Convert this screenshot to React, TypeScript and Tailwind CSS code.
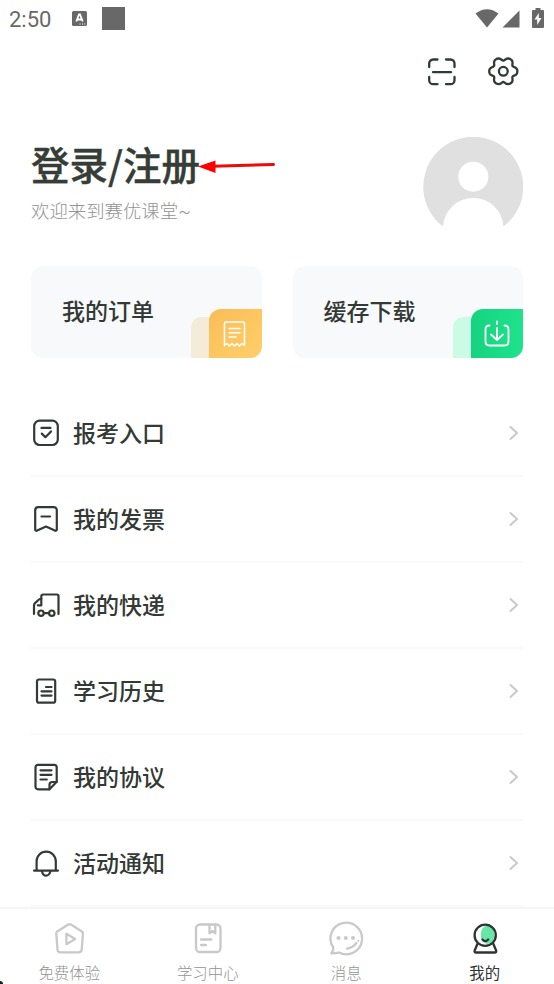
import type { ReactNode } from "react";

type IconProps = {
  w: number;
  h: number;
  stroke?: number;
  className?: string;
  children: ReactNode;
};

function Icon({ w, h, stroke = 2, className = "", children }: IconProps) {
  return (
    <svg
      width={w}
      height={h}
      viewBox={`0 0 ${w} ${h}`}
      fill="none"
      stroke="currentColor"
      strokeWidth={stroke}
      strokeLinecap="round"
      strokeLinejoin="round"
      className={`block shrink-0 ${className}`}
    >
      {children}
    </svg>
  );
}

const menuItems = [
  {
    label: "报考入口",
    icon: (
      <>
        <rect x="3.2" y="2.6" width="23.6" height="24.4" rx="5.5" />
        <path d="M10.5 9.9h9M10.8 15.6l3.6 3.6 5.6-5.8" />
      </>
    ),
  },
  {
    label: "我的发票",
    icon: (
      <>
        <path d="M4.2 25.5V6.2a3 3 0 0 1 3-3h15.6a3 3 0 0 1 3 3V25.5c0 1-1 1.6-2 1.1L15 22.5l-8.8 4.1c-1 .5-2-.1-2-1.1z" />
        <path d="M10.5 12.5h8.5" />
      </>
    ),
  },
  {
    label: "我的快递",
    icon: (
      <>
        <path d="M3 24v-8.500q0-1.500 1-2.400l4-3.600q.800-.700 2.300-.700V6.500q0-2 2-2h13.500q1.700 0 1.700 1.700V24" />
        <path d="M10.300 8.800v6.500H6.800" />
        <circle cx="10" cy="23.200" r="2.700" />
        <circle cx="20.800" cy="23.200" r="2.700" />
        <path d="M13 23.200h5" />
      </>
    ),
  },
  {
    label: "学习历史",
    icon: (
      <>
        <rect x="6" y="3.500" width="18.200" height="23.200" rx="2" />
        <path d="M15 11h5.500M10.500 15.300h10M10.500 19.600h10" />
      </>
    ),
  },
  {
    label: "我的协议",
    icon: (
      <>
        <path d="M18.500 27.300H7a2.500 2.500 0 0 1-2.500-2.500V5.300A2.500 2.500 0 0 1 7 2.800h16.200A2.500 2.500 0 0 1 25.700 5.300v14.500z" />
        <path d="M18.500 27.300v-4.600q0-2.700 2.700-2.700h4.500M9.500 8.300h11M9.500 12.800h11M9.500 17.500h6.300" />
      </>
    ),
  },
  {
    label: "活动通知",
    icon: (
      <>
        <path d="M3 22.600h24M5.600 22.300V13.300a9.600 9.600 0 0 1 19.200 0v9" />
        <path d="M10.800 23q1.300 4.700 4.300 4.700t4.500-4.700" />
      </>
    ),
  },
];

const tabs = [
  {
    label: "免费体验",
    icon: (
      <>
        <path d="M17.900 4.700a3 3 0 0 1 3.400 0l10.600 6.800a2.500 2.500 0 0 1 1 2.500l-1.200 15.600a3 3 0 0 1-3 2.700H10.500a3 3 0 0 1-3-2.700l-1.200-15.600a2.500 2.500 0 0 1 1-2.500z" />
        <path d="M16.400 13.800v10.400l8.800-5.200z" />
      </>
    ),
  },
  {
    label: "学习中心",
    icon: (
      <>
        <rect x="7" y="4.500" width="24.500" height="27.500" rx="4" />
        <path d="M20.500 5v8.300l2.900-2.300 2.900 2.300V5M12 19.500h10.300M12 25h5" />
      </>
    ),
  },
  {
    label: "消息",
    icon: (
      <>
        <path d="M6.300 27.500A15.800 15.800 0 1 1 12 32.500q-3.500 1-7.700.800 2.200-2.500 2-5.800z" />
        <path d="M29.300 23q-3.300 4.600-9.200 5.700" />
        <g fill="currentColor" stroke="none">
          <circle cx="11.500" cy="18" r="2" />
          <circle cx="18.800" cy="18" r="2" />
          <circle cx="26" cy="18" r="2" />
          <circle cx="31.300" cy="20.800" r="1" />
        </g>
      </>
    ),
  },
  {
    label: "我的",
    active: true,
    icon: (
      <>
        <path d="M11.500 23.800l-2.800 6.700q-.700 2 1.500 2h18.400q2.200 0 1.500-2l-2.800-6.700" />
        <circle cx="19.200" cy="15.500" r="11" fill="#fff" stroke="none" />
        <ellipse cx="21.500" cy="14.800" rx="6.800" ry="9.200" fill="#67e7a5" stroke="none" />
        <circle cx="19.200" cy="15.300" r="10.600" />
        <path d="M16.500 19.500q2.700 3.200 5.700 0" />
      </>
    ),
  },
];

// six-lobed outline of the settings icon
const gearPoints = Array.from({ length: 72 }, (_, i) => {
  const a = (i / 72) * Math.PI * 2;
  const r = 12.7 + 1.7 * Math.cos(a * 6) - 0.35 * Math.cos(a * 12);
  return `${(16.3 + r * Math.cos(a)).toFixed(2)},${(16.3 + r * Math.sin(a)).toFixed(2)}`;
}).join(" ");

function StatusBar() {
  return (
    <header className="flex h-[38px] items-center pl-[9px] pr-[9px] text-[#686868]">
      <span className="w-[63px] pt-[2px] font-[Roboto,sans-serif] text-[22px] leading-none">2:50</span>
      <svg width="15" height="15" viewBox="0 0 15 15" className="mt-[-2px]">
        <rect width="15" height="15" rx="1.500" fill="currentColor" />
        <path d="M4.300 10.500L7 3.500h1l2.700 7M5.300 8.500h4.400" fill="none" stroke="#fff" strokeWidth="1.800" />
        <path d="M7.500 13h1M10 13h1M12.300 13h1" stroke="#fff" strokeWidth="1" />
      </svg>
      <div className="ml-[15px] mt-[-1px] size-[23px] bg-[#686868]" />
      <div className="ml-auto flex items-center">
        <svg width="24" height="19" viewBox="0 0 24 19" fill="currentColor" className="mt-[-2px]">
          <path d="M.500 4.500Q12-4 23.500 4.500L12 18.500z" />
        </svg>
        <svg width="18" height="18" viewBox="0 0 18 18" fill="currentColor" className="ml-[3px] mt-[-1px]">
          <path d="M17.500.500v17H.500z" />
        </svg>
        <svg width="12" height="20" viewBox="0 0 12 20" fill="currentColor" className="ml-[12px] mr-px mt-[-2px]">
          <path d="M3.500 0h5v2H11q1 0 1 1v16q0 1-1 1H1q-1 0-1-1V3q0-1 1-1h2.500z" />
          <path d="M6.800 5L2.500 11.500h2.700V17l4.300-7H6.800z" fill="#fff" />
        </svg>
      </div>
    </header>
  );
}

function Toolbar() {
  return (
    <div className="flex h-[68px] items-center justify-end gap-[30px] pr-[34px] text-[#333934]">
      <Icon w={30} h={30} stroke={2.300} className="mt-[-1px]">
        <path d="M2.200 10V6.500a4 4 0 0 1 4-4H10.500M19 2.500h4.500a4 4 0 0 1 4 4V10M27.500 20v3.200a4 4 0 0 1-4 4H19M10.500 27.200H6.200a4 4 0 0 1-4-4V20M6 15.200h18" />
      </Icon>
      <Icon w={33} h={33} stroke={2.300} className="mt-[-1px]">
        <polygon points={gearPoints} />
        <circle cx="16.300" cy="16.300" r="4.400" />
      </Icon>
    </div>
  );
}

function Profile() {
  return (
    <section className="flex h-[160px] justify-between px-[31px] pt-[31px]">
      <div className="relative">
        <h1 className="mt-[-2px] text-[38.500px] font-medium leading-[56px] text-[#363d37] [-webkit-text-stroke:0.400px_#363d37]">
          登录/注册
        </h1>
        <p className="mt-[6px] text-[18.400px] font-light leading-[27px] text-[#939393]">
          欢迎来到赛优课堂<span className="font-[Roboto,sans-serif]">~</span>
        </p>
        <svg width="78" height="16" viewBox="0 0 78 16" className="absolute left-[167px] top-[21px]">
          <path d="M15 8.300L75.500 6.500" stroke="#e80c0c" strokeWidth="3" strokeLinecap="round" />
          <path d="M0 8.500L17.500 2.500v12.500z" fill="#f00" />
        </svg>
      </div>
      <svg width="100" height="100" viewBox="0 0 100 100">
        <path
          d="M20 89.500a50 50 0 1 1 60.500 0A30.300 30.300 0 0 0 20 89.500z"
          fill="#e0e0e0"
        />
        <circle cx="50.300" cy="39.700" r="15" fill="#fff" />
      </svg>
    </section>
  );
}

function Shortcuts() {
  return (
    <section className="grid grid-cols-2 gap-[31px] px-[31px]">
      <div className="flex h-[92px] justify-between overflow-hidden rounded-[12px] bg-[#f8f9fb]">
        <span className="pl-[31px] pt-[26px] text-[23px] font-medium leading-[36px] text-[#333934]">我的订单</span>
        <div className="flex items-end">
          <div className="-mr-[8px] h-[41px] w-[26px] rounded-tl-[10px] bg-[#f5ebd9]" />
          <div className="flex h-[49px] w-[53px] items-center justify-center rounded-tl-[12px] bg-linear-to-br from-[#f9bd59] to-[#ffcf69] text-white">
            <Icon w={24} h={28} stroke={1.500}>
              <path d="M1.500 25.500V3.500q0-1.500 1.500-1.500h17q1.500 0 1.500 1.500v22l-2.500-2-2.500 2.500-2.500-2.500-2.500 2.500-2.500-2.500-2.500 2.500-2.500-2.500z" />
              <path d="M6 8.500h11M6 12.800h11M6 17h7" />
            </Icon>
          </div>
        </div>
      </div>
      <div className="flex h-[92px] justify-between overflow-hidden rounded-[12px] bg-[#f8f9fb]">
        <span className="pl-[31px] pt-[26px] text-[23px] font-medium leading-[36px] text-[#333934]">缓存下载</span>
        <div className="flex items-end">
          <div className="-mr-[8px] h-[41px] w-[26px] rounded-tl-[10px] bg-[#ccfbe5]" />
          <div className="flex h-[49px] w-[52px] items-center justify-center rounded-tl-[12px] bg-linear-to-r from-[#15d37e] to-[#1fe28d] text-white">
            <Icon w={26} h={28} stroke={1.800}>
              <path d="M5.500 5.500Q1.500 5.500 1.500 9.500v12q0 4 4 4h15q4 0 4-4v-12q0-4-4-4" />
              <path d="M13 1.500v2.500M13 8v11.500M7 14.500l6 5.500 6-5.500" />
            </Icon>
          </div>
        </div>
      </div>
    </section>
  );
}

export default function App() {
  return (
    <main className="relative flex h-[984px] w-[554px] flex-col overflow-hidden bg-white font-['Noto_Sans_CJK_SC',sans-serif]">
      <StatusBar />
      <Toolbar />
      <Profile />
      <Shortcuts />

      <ul className="mt-[33px] flex-1 px-[31px]">
        {menuItems.map((item) => (
          <li key={item.label} className="flex h-[86px] items-center border-b-2 border-[#f9f9f9] text-[#333934]">
            <Icon w={30} h={30} stroke={2.200}>
              {item.icon}
            </Icon>
            <span className="ml-[12px] mt-[-2px] text-[23px] font-medium leading-[34px]">{item.label}</span>
            <Icon w={10} h={16} stroke={2} className="ml-auto mr-[4px] text-[#c9c9c9]">
              <path d="M1.500 2l6.500 6-6.500 6" />
            </Icon>
          </li>
        ))}
      </ul>

      <nav className="grid h-[77px] grid-cols-4 border-t-2 border-[#f5f5f5] bg-white">
        {tabs.map((tab) => (
          <div
            key={tab.label}
            className={`flex flex-col items-center pt-[11px] ${tab.active ? "text-[#2f3430]" : "text-[#c9c9c9]"}`}
          >
            <Icon w={38} h={38} stroke={2.300}>
              {tab.icon}
            </Icon>
            <span
              className={`mt-[3px] text-[15.400px] leading-[22px] ${tab.active ? "font-normal text-[#333]" : "font-light text-[#939393]"}`}
            >
              {tab.label}
            </span>
          </div>
        ))}
      </nav>
      <div className="absolute bottom-0 left-0 size-[3px] rounded-tr-[3px] bg-[#10202c]" />
    </main>
  );
}
